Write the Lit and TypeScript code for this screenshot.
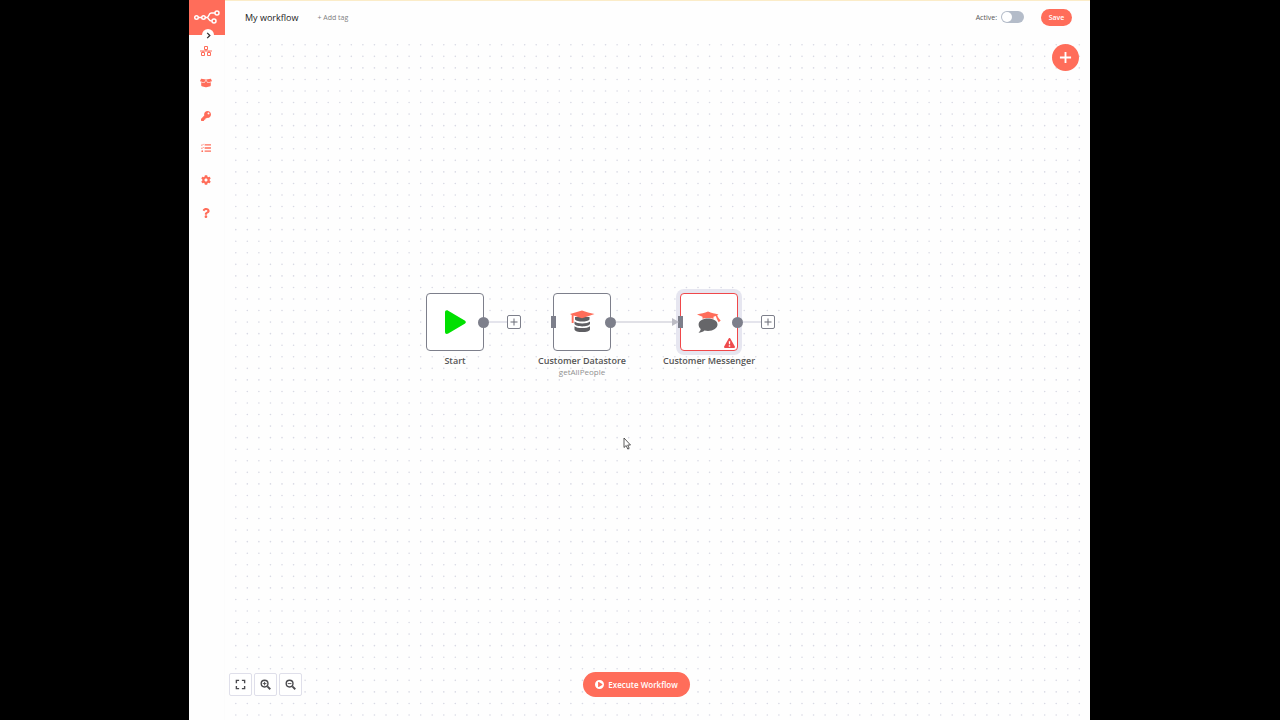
import { LitElement, html, css, svg, nothing, TemplateResult } from "lit";
import { customElement, property, state } from "lit/decorators.js";

/* ---------- icons ---------- */

const icon = (viewBox: string, body: TemplateResult, cls = "icon") =>
  html`<svg class=${cls} viewBox=${viewBox} fill="currentColor" aria-hidden="true">${body}</svg>`;

const icons = {
  workflows: icon("0 0 12 10", svg`<g fill="none" stroke="currentColor"><path d="M4.500 .5h3v3h-3zM1.500 6.500h3v3h-3zM7.500 6.500h3v3h-3z"/><path d="M0 5h12M6 3.500V5M3 5v1.500M9 5v1.500"/></g>`),
  templates: icon("0 0 640 512", svg`<path d="M425.7 256c-16.9 0-32.8-9-41.4-23.4L320 126l-64.2 106.6c-8.7 14.5-24.6 23.5-41.5 23.5-4.5 0-9-.6-13.3-1.9L64 215v178c0 14.7 10 27.5 24.2 31l216.2 54.1c10.2 2.5 20.9 2.5 31 0L551.8 424c14.2-3.6 24.2-16.4 24.2-31V215l-137 39.1c-4.3 1.3-8.8 1.9-13.3 1.9zm212.6-112.2L586.8 41c-3.1-6.2-9.8-9.8-16.7-8.9L320 64l91.7 152.1c3.8 6.3 11.4 9.3 18.5 7.3l197.9-56.5c9.9-2.9 14.7-13.9 10.2-23.1zM53.2 41L1.7 143.8c-4.6 9.2.3 20.2 10.1 23l197.9 56.5c7.1 2 14.7-1 18.5-7.3L320 64 69.8 32.1c-6.9-.8-13.5 2.7-16.6 8.9z"/>`),
  credentials: icon("0 0 512 512", svg`<path d="M512 176C512 273.200 433.200 352 336 352c-11.220 0-22.190-1.060-32.830-3.070l-24 27A24 24 0 0 1 261.220 384H224v40c0 13.250-10.750 24-24 24h-40v40c0 13.250-10.750 24-24 24H24c-13.250 0-24-10.750-24-24v-78.060c0-6.360 2.530-12.470 7.030-16.970l161.800-161.800C163.100 213.810 160 195.270 160 176 160 78.800 238.800 0 336 0 433.490 0 512 78.510 512 176zM336 128c0 26.510 21.490 48 48 48s48-21.490 48-48-21.490-48-48-48-48 21.490-48 48z"/>`),
  executions: icon("0 0 512 512", svg`<path d="M186 62h310c9 0 16 7 16 16v36c0 9-7 16-16 16H186zM186 222h310c9 0 16 7 16 16v36c0 9-7 16-16 16H186zM186 382h310c9 0 16 7 16 16v36c0 9-7 16-16 16H186z"/><path d="M10 92l42 40 84-88M10 252l42 40 84-88" fill="none" stroke="currentColor" stroke-width="40"/><circle cx="64" cy="416" r="44"/>`),
  settings: icon("0 0 512 512", svg`<path d="M487.4 315.7l-42.6-24.6c4.3-23.2 4.3-47 0-70.2l42.6-24.6c4.9-2.8 7.1-8.6 5.5-14-11.1-35.6-30-67.8-54.7-94.6-3.8-4.1-10-5.1-14.800-2.300L380.800 110c-17.900-15.400-38.500-27.300-60.800-35.100V25.800c0-5.600-3.900-10.500-9.400-11.700-36.700-8.200-74.300-7.800-109.200 0-5.500 1.200-9.400 6.100-9.400 11.700V75c-22.200 7.900-42.800 19.800-60.800 35.100L88.700 85.500c-4.900-2.800-11-1.900-14.800 2.300-24.700 26.700-43.600 58.900-54.700 94.600-1.700 5.400.6 11.200 5.500 14L67.300 221c-4.300 23.200-4.300 47 0 70.200l-42.600 24.600c-4.900 2.800-7.100 8.600-5.500 14 11.100 35.600 30 67.800 54.700 94.600 3.800 4.100 10 5.100 14.800 2.300l42.600-24.600c17.900 15.400 38.500 27.300 60.800 35.100v49.200c0 5.600 3.900 10.500 9.400 11.700 36.700 8.200 74.300 7.800 109.200 0 5.500-1.200 9.400-6.100 9.400-11.700v-49.200c22.200-7.900 42.800-19.800 60.800-35.100l42.600 24.600c4.900 2.800 11 1.900 14.800-2.300 24.700-26.700 43.600-58.900 54.700-94.600 1.500-5.500-.7-11.300-5.600-14.100zM256 336c-44.100 0-80-35.900-80-80s35.900-80 80-80 80 35.900 80 80-35.900 80-80 80z"/>`),
  help: icon("0 0 384 512", svg`<path d="M202 0C122.200 0 70.500 32.700 29.900 91c-7.400 10.600-5.100 25.100 5.200 32.900l43.100 32.700c10.400 7.900 25.100 6 33.300-4.100 25-31.400 43.600-49.500 82.700-49.500 30.800 0 68.800 19.800 68.800 49.600 0 22.600-18.600 34.100-49 51.200-35.400 19.900-82.300 44.600-82.300 106.400V320c0 13.300 10.700 24 24 24h72.500c13.300 0 24-10.700 24-24v-5.800c0-42.900 125.300-44.600 125.300-160.600C377.500 66.300 286.900 0 202 0zM192 373.500a69.300 69.300 0 1 0 0 138.500 69.300 69.300 0 0 0 0-138.500z"/>`),
  logo: html`<svg class="logo-mark" viewBox="0 0 52 28" fill="none" stroke="#fff" stroke-width="3" aria-hidden="true">
    <circle cx="5" cy="15" r="3.500"/><circle cx="19" cy="15" r="3.500"/><circle cx="46" cy="6" r="4"/><circle cx="40" cy="22" r="4"/>
    <path d="M8.500 15h7M22.500 15h3c5 0 3-9 9-9h7.500M25.500 15c5 0 3 7 10 7"/>
  </svg>`,
  chevron: icon("0 0 8 8", svg`<path d="M2.500 1l3 3-3 3" fill="none" stroke="currentColor" stroke-width="1.500"/>`),
  plus: icon("0 0 14 14", svg`<path d="M6 1h2v5h5v2H8v5H6V8H1V6h5z"/>`),
  smallPlus: icon("0 0 12 12", svg`<path d="M5.500 2.500h1v3h3v1h-3v3h-1v-3h-3v-1h3z"/>`),
  fit: icon("0 0 12 12", svg`<path d="M1.500 4.500v-3h3M7.500 1.500h3v3M10.500 7.500v3h-3M4.500 10.500h-3v-3" fill="none" stroke="currentColor" stroke-width="1.500"/>`),
  zoomIn: icon("0 0 12 12", svg`<g fill="none" stroke="currentColor"><circle cx="5" cy="5" r="3.700" stroke-width="1.500"/><path d="M8 8l3.200 3.200" stroke-width="2"/><path d="M3 5h4M5 3v4"/></g>`),
  zoomOut: icon("0 0 12 12", svg`<g fill="none" stroke="currentColor"><circle cx="5" cy="5" r="3.700" stroke-width="1.500"/><path d="M8 8l3.200 3.200" stroke-width="2"/><path d="M3 5h4"/></g>`),
  playCircle: icon("0 0 16 16", svg`<path fill-rule="evenodd" d="M8 0a8 8 0 1 0 0 16A8 8 0 0 0 8 0zM5.500 4.200v7.600c0 .7.600 1 1.200.7l6-3.800c.6-.3.600-1 0-1.400l-6-3.800c-.6-.3-1.200 0-1.200.7z"/>`),
  warning: icon("0 0 12 11", svg`<path fill-rule="evenodd" d="M6 0c.4 0 .7.200.9.500l5 8.800c.4.700 0 1.700-.9 1.700H1c-.9 0-1.300-1-.9-1.700l5-8.800C5.300.2 5.600 0 6 0zM5.200 3.500l.2 3.500h1.200l.2-3.500zM5.200 8v1.500h1.600V8z"/>`),
  start: icon("0 0 26 26", svg`<path fill="#00e000" d="M3 3.500C3 1.500 4.500.700 6.200 1.700l16.500 9.800c1.500.9 1.500 2.400 0 3.300L6.200 24.500C4.500 25.500 3 24.700 3 22.700z"/>`, "glyph"),
  datastore: icon("0 0 26 26", svg`
    <path fill="#5f5f63" d="M6 8v2.500c2 2.700 12.500 2.700 14.500 0V8zM5.500 12.500c2.500 2.500 13 2.500 15.500 0v2.600c-1.500 3.200-14 3.200-15.500 0zM5.500 17.200c2.500 2.500 13 2.500 15.500 0v3c0 3.800-15.500 3.800-15.500 0z"/>
    <path fill="#ff6d5a" d="M13 1.500c4 1.500 8 2.500 12.500 3.600C21 6.600 17 8 13 9.200 9.500 8.300 6.500 7.200 4.600 6.600V14H2.700V6L1 5.100C5 4 9 2.800 13 1.500z"/>`, "glyph"),
  messenger: icon("0 0 26 26", svg`
    <path fill="#666669" d="M12 9.500c5.500 0 9.500 2.500 9.500 6S17.500 22 12 22c-1.300 0-2.500-.2-3.600-.5C7 22.800 5 23.700 2.500 23.700c1.300-1.200 2-2.300 2.200-3.700C3.300 18.800 2.600 17.200 2.600 15.500c0-3.500 4-6 9.400-6z"/>
    <path fill="#ff6d5a" d="M12 2.500c3.500 1.300 6.500 2.100 10.500 3l-1.300.8c.7 2 1.900 3.700 3.500 5.300l-2 1.600c-1.300-2-2.200-4-2.900-6.200l-2.300.8v2c-2.500-1.200-8.500-1.200-11 0v-2L1 5.500c4-.9 7.500-1.700 11-3z"/>`, "glyph"),
};

const baseStyles = css`
  *, *::before, *::after { box-sizing: border-box; }
  button {
    margin: 0;
    padding: 0;
    border: 0;
    background: none;
    color: inherit;
    font: inherit;
    cursor: pointer;
  }
  svg { display: block; }
`;

/* ---------- workflow node ---------- */

@customElement("workflow-node")
class WorkflowNode extends LitElement {
  @property() name = "";
  @property() subtitle = "";
  @property() kind: "start" | "datastore" | "messenger" = "start";
  @property({ type: Boolean }) input = false;
  @property({ type: Boolean }) linked = false;
  @property({ type: Boolean, reflect: true }) failed = false;

  static styles = [
    baseStyles,
    css`
      :host { display: block; width: 58px; }
      .box {
        position: relative;
        display: grid;
        place-items: center;
        height: 58px;
        border: 1px solid #7d7f8b;
        border-radius: 4px;
        background: #fff;
      }
      :host([failed]) .box {
        border-color: #f0484a;
        box-shadow: 0 0 0 4px #e6e6f0;
      }
      .glyph { width: 26px; height: 26px; }
      .output {
        position: absolute;
        left: 51px;
        top: 22px;
        display: flex;
        align-items: center;
        height: 12px;
      }
      .dot { width: 11px; height: 11px; border-radius: 50%; background: #7d7f8b; }
      .wire { width: 18px; height: 2px; background: #e4e4ec; }
      .add {
        display: grid;
        place-items: center;
        width: 14px;
        height: 14px;
        border: 1px solid #7d7f8b;
        border-radius: 2px;
        background: #fff;
        color: #6b6d78;
      }
      .add .icon { width: 12px; height: 12px; }
      .input {
        position: absolute;
        left: -3px;
        top: 22px;
        width: 5px;
        height: 12px;
        background: #7d7f8b;
      }
      .warning { position: absolute; right: 2px; bottom: 2px; color: #ee4b4d; }
      .warning .icon { width: 11px; height: 10px; }
      .caption {
        display: flex;
        flex-direction: column;
        align-items: center;
        margin-top: 4px;
        white-space: nowrap;
      }
      .name { font-size: 9px; line-height: 12px; font-weight: 600; color: #555; }
      .subtitle { font-size: 8px; line-height: 10px; color: #909090; }
    `,
  ];

  render() {
    return html`
      <div class="box">
        ${icons[this.kind]}
        ${this.input ? html`<span class="input"></span>` : nothing}
        <div class="output">
          <span class="dot"></span>
          ${this.linked
            ? nothing
            : html`<span class="wire"></span>
                <button class="add" aria-label="Add node after ${this.name}">${icons.smallPlus}</button>`}
        </div>
        ${this.failed ? html`<span class="warning">${icons.warning}</span>` : nothing}
      </div>
      <div class="caption">
        <span class="name">${this.name}</span>
        ${this.subtitle ? html`<span class="subtitle">${this.subtitle}</span>` : nothing}
      </div>
    `;
  }
}

/* ---------- application ---------- */

const navItems = [
  { label: "Workflows", icon: icons.workflows },
  { label: "Templates", icon: icons.templates },
  { label: "Credentials", icon: icons.credentials },
  { label: "Executions", icon: icons.executions },
  { label: "Settings", icon: icons.settings },
  { label: "Help", icon: icons.help },
];

const steps = [...Array(9).keys()];

@customElement("app-root")
class AppRoot extends LitElement {
  @state() active = false;

  static styles = [
    baseStyles,
    css`
      :host {
        display: grid;
        grid-template-columns: 189fr 901fr 190fr;
        min-height: 100vh;
        background: #000;
        font-family: "Open Sans", "Noto Sans", sans-serif;
        font-size: 8px;
        color: #555;
      }
      .app {
        grid-column: 2;
        display: grid;
        grid-template-columns: 36px 1fr;
        background: #fefefe;
        box-shadow: inset 0 1px #fbecc8;
      }
      .sidebar { position: relative; border-right: 1px solid #fcfcfc; color: #ff6d5a; }
      .logo {
        display: grid;
        place-items: center;
        width: 36px;
        height: 35px;
        padding-bottom: 2px;
        background: #ff6d5a;
      }
      .logo-mark { width: 26px; height: 14px; }
      .expand {
        position: absolute;
        left: 13px;
        top: 29px;
        display: grid;
        place-items: center;
        width: 12px;
        height: 12px;
        border-radius: 50%;
        background: #fff;
        color: #333;
      }
      .expand .icon { width: 7px; height: 7px; }
      .nav {
        display: grid;
        grid-auto-rows: 1fr;
        height: 194px;
        margin: 0;
        padding: 0 2px 0 0;
        list-style: none;
      }
      .nav-link { display: grid; place-items: center; height: 100%; color: inherit; }
      .nav-link .icon { width: 12px; height: 10px; }

      .main { display: grid; grid-template-rows: 35px 1fr; min-width: 0; }
      .header {
        display: flex;
        align-items: center;
        padding: 0 18px 1px 20px;
      }
      .title { margin: 0 19px 0 0; font-size: 9px; font-weight: 400; color: #222; }
      .tag { font-size: 7px; color: #808080; }
      .toggle {
        display: flex;
        align-items: center;
        gap: 4px;
        margin: 0 17px 0 auto;
        font-size: 7px;
      }
      .switch {
        appearance: none;
        display: flex;
        width: 23px;
        height: 12px;
        margin: 0;
        padding: 1px;
        border-radius: 6px;
        background: #b4bcc9;
      }
      .switch::before {
        content: "";
        width: 10px;
        height: 10px;
        border-radius: 50%;
        background: #fff;
      }
      .switch:checked { justify-content: flex-end; background: #13ce66; }
      .save {
        width: 31px;
        height: 17px;
        border-radius: 9px;
        background: #ff6d5a;
        color: #fff;
        font-size: 7px;
        font-weight: 600;
      }

      .canvas { position: relative; overflow: hidden; }
      .grid { position: absolute; inset: 0; width: 100%; height: 100%; }
      .node { position: absolute; top: 258px; }
      .node-start { left: 201px; }
      .node-datastore { left: 328px; }
      .node-messenger { left: 455px; }
      .link {
        position: absolute;
        left: 391px;
        top: 282px;
        width: 63px;
        height: 10px;
      }
      .pointer { position: absolute; left: 398px; top: 402px; width: 8px; height: 13px; }
      .create {
        position: absolute;
        right: 11px;
        top: 9px;
        display: grid;
        place-items: center;
        width: 27px;
        height: 27px;
        border-radius: 50%;
        background: #ff6d5a;
        color: #fff;
      }
      .create .icon { width: 13px; height: 13px; }
      .footer {
        position: absolute;
        inset: auto 0 23px 0;
        display: grid;
        grid-template-columns: 1fr auto 1fr;
        align-items: center;
        padding: 0 46px 0 4px;
      }
      .zoom { display: flex; gap: 2px; }
      .zoom-button {
        display: grid;
        place-items: center;
        width: 23px;
        height: 23px;
        border: 1px solid #dfdfea;
        border-radius: 2px;
        background: #fff;
        color: #4a4a4e;
      }
      .zoom-button .icon { width: 11px; height: 11px; }
      .execute {
        display: flex;
        align-items: center;
        gap: 4px;
        height: 25px;
        padding: 0 12px;
        border-radius: 13px;
        background: #ff6d5a;
        color: #fff;
        font-weight: 600;
      }
      .execute .icon { width: 9px; height: 9px; }
    `,
  ];

  render() {
    return html`
      <div class="app">
        <aside class="sidebar">
          <div class="logo">${icons.logo}</div>
          <button class="expand" aria-label="Expand menu">${icons.chevron}</button>
          <nav>
            <ul class="nav">
              ${navItems.map(
                (item) => html`<li><a class="nav-link" href="#" aria-label=${item.label}>${item.icon}</a></li>`
              )}
            </ul>
          </nav>
        </aside>
        <div class="main">
          <header class="header">
            <h1 class="title">My workflow</h1>
            <button class="tag">+ Add tag</button>
            <label class="toggle">
              Active:
              <input
                class="switch"
                type="checkbox"
                role="switch"
                .checked=${this.active}
                @change=${(e: Event) => (this.active = (e.target as HTMLInputElement).checked)}
              />
            </label>
            <button class="save">Save</button>
          </header>
          <main class="canvas">
            <svg class="grid" aria-hidden="true">
              <defs>
                <pattern id="dots" x="5" y="4" width="104" height="104" viewBox="0 0 180 180" patternUnits="userSpaceOnUse">
                  ${steps.map((row) =>
                    steps.map((col) => svg`<circle cx=${col * 20 + 10} cy=${row * 20 + 10} r="1.4" fill="#d8d9e4" />`)
                  )}
                </pattern>
              </defs>
              <rect x="5" y="4" width="100%" height="100%" fill="url(#dots)" />
            </svg>
            <workflow-node class="node node-start" name="Start" kind="start"></workflow-node>
            <workflow-node class="node node-datastore" name="Customer Datastore" subtitle="getAllPeople" kind="datastore" input linked></workflow-node>
            <workflow-node class="node node-messenger" name="Customer Messenger" kind="messenger" input failed></workflow-node>
            <svg class="link" viewBox="0 0 63 10" aria-hidden="true">
              <path d="M0 5h58" stroke="#e0e0e6" stroke-width="2" />
              <path d="M56 1l7 4-7 4z" fill="#bcbcc4" />
            </svg>
            <svg class="pointer" viewBox="0 0 8 13" aria-hidden="true">
              <path d="M1 1v9.500l2.200-2 1.500 3.500 1.500-.7-1.500-3.300h2.800z" fill="#fff" stroke="#333" stroke-width=".8" />
            </svg>
            <button class="create" aria-label="Add node">${icons.plus}</button>
            <div class="footer">
              <div class="zoom">
                <button class="zoom-button" aria-label="Zoom to fit">${icons.fit}</button>
                <button class="zoom-button" aria-label="Zoom in">${icons.zoomIn}</button>
                <button class="zoom-button" aria-label="Zoom out">${icons.zoomOut}</button>
              </div>
              <button class="execute">${icons.playCircle}Execute Workflow</button>
            </div>
          </main>
        </div>
      </div>
    `;
  }
}
